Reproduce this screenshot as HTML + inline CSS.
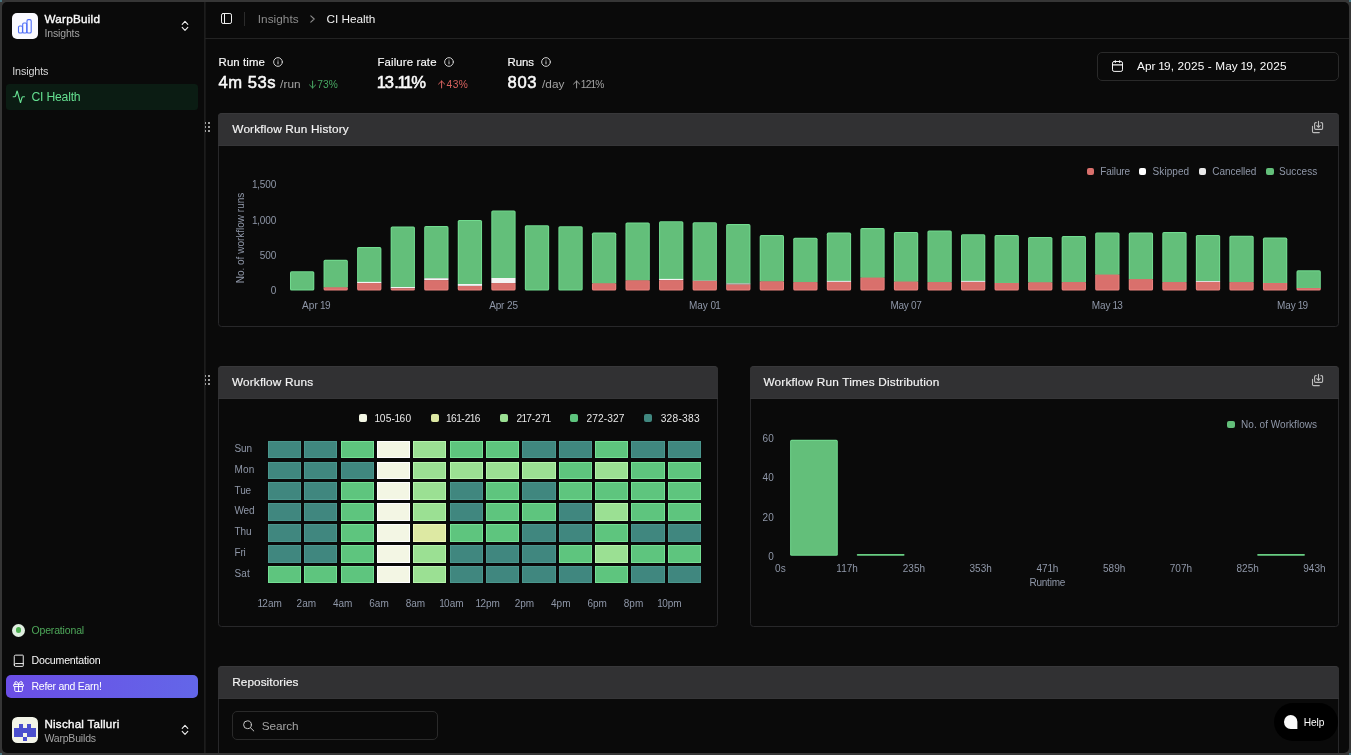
<!DOCTYPE html>
<html><head><meta charset="utf-8"><title>CI Health</title>
<style>
html,body{margin:0;padding:0;}
body{width:1351px;height:755px;overflow:hidden;background:#363636;font-family:"Liberation Sans",sans-serif;position:relative;}
#win{position:absolute;left:2px;top:2px;width:1347px;height:751px;background:#0a0a0a;border-radius:5px;overflow:hidden;}
#app{position:absolute;left:-2px;top:-2px;width:1351px;height:755px;will-change:transform;}
.t{position:absolute;white-space:nowrap;}
.abs{position:absolute;}
.t i{font-style:normal;margin:0 -0.07em;}
.card{position:absolute;border:1px solid #28282a;border-radius:3.5px;box-sizing:border-box;background:#0a0a0a;}
.hd{position:absolute;left:-1px;top:-1px;right:-1px;height:33px;background:#313133;border-radius:4px 4px 0 0;box-sizing:border-box;border-top:1px solid #38383a;border-bottom:1px solid #363638;}
svg{position:absolute;overflow:visible;}
</style></head><body>
<div class="abs" style="left:0;top:0;width:2px;height:2px;background:#4a7580"></div>
<div class="abs" style="right:0;top:0;width:2px;height:2px;background:#4a7580"></div>
<div class="abs" style="left:0;bottom:0;width:2px;height:2px;background:#4a7580"></div>
<div class="abs" style="right:0;bottom:0;width:2px;height:2px;background:#4a7580"></div>
<div id="win"><div id="app">
<div class="abs" style="left:204px;top:0;width:1px;height:755px;background:#1d1d1d"></div><div class="abs" style="left:205px;top:0;width:1px;height:755px;background:#171717"></div>
<div class="abs" style="left:12px;top:13px;width:26px;height:26px;border-radius:5px;background:#fafaff"></div>
<svg style="left:12px;top:13px" width="26" height="26" viewBox="0 0 26 26" fill="none" stroke="#4f6ef7" stroke-width="1.1">
<rect x="6.5" y="13" width="4" height="7" rx="1.3"/><rect x="10.7" y="10" width="4" height="10" rx="1.3"/><rect x="15" y="6.6" width="4.2" height="13.4" rx="1.3"/></svg>
<span id="wb" class="t" style="left:44.50px;top:11.00px;font-size:11.7px;line-height:16px;color:#fafafa;font-weight:400;letter-spacing:0.245px;-webkit-text-stroke:0.37px #fafafa;">WarpBuild</span>
<span id="wsub" class="t" style="left:44.50px;top:26.00px;font-size:10.5px;line-height:15px;color:#a3a3a3;font-weight:400;letter-spacing:-0.150px;">Insights</span>
<svg style="left:181.3px;top:20.1px" width="8" height="11.6" viewBox="0 0 8 11.6" fill="none" stroke="#ededed" stroke-width="1.1" stroke-linecap="round" stroke-linejoin="round"><path d="M1.200 4.300L4 1.300L6.800 4.300"/><path d="M1.200 7.300L4 10.300L6.800 7.300"/></svg>
<span id="sins" class="t" style="left:12.20px;top:64.00px;font-size:10.8px;line-height:15px;color:#d4d4d4;font-weight:400;letter-spacing:-0.138px;">Insights</span>
<div class="abs" style="left:6px;top:84px;width:192px;height:25.6px;border-radius:3.5px;background:#0b1c13"></div>
<svg style="left:11.5px;top:90.1px" width="13.6" height="13.6" viewBox="0 0 24 24" fill="none" stroke="#66e092" stroke-width="2" stroke-linecap="round" stroke-linejoin="round"><path d="M22 12h-2.48a2 2 0 0 0-1.93 1.46l-2.35 8.36a.25.25 0 0 1-.48 0L9.24 2.18a.25.25 0 0 0-.48 0l-2.35 8.36A2 2 0 0 1 4.49 12H2"/></svg>
<span id="cih" class="t" style="left:31.50px;top:89.00px;font-size:12.2px;line-height:17px;color:#64df90;font-weight:400;letter-spacing:-0.211px;">CI Health</span>
<div class="abs" style="left:12px;top:623.5px;width:13px;height:13px;border-radius:50%;background:#dfeee0"></div>
<div class="abs" style="left:15.7px;top:627.2px;width:5.6px;height:5.6px;border-radius:50%;background:#4caf50"></div>
<span id="oper" class="t" style="left:31.50px;top:623.00px;font-size:10.5px;line-height:15px;color:#4ea85a;font-weight:400;letter-spacing:-0.164px;">Operational</span>
<svg style="left:11.83px;top:654.15px" width="13.5" height="13.5" viewBox="0 0 24 24" fill="none" stroke="#f5f5f5" stroke-width="1.7" stroke-linecap="round" stroke-linejoin="round"><path d="M4 19.5v-15A2.5 2.5 0 0 1 6.500 2H19a1 1 0 0 1 1 1v18a1 1 0 0 1-1 1H6.500a1 1 0 0 1 0-5H20"/></svg>
<span id="docs" class="t" style="left:31.50px;top:653.00px;font-size:10.6px;line-height:15px;color:#fafafa;font-weight:400;letter-spacing:-0.184px;">Documentation</span>
<div class="abs" style="left:5.5px;top:675px;width:192.5px;height:22.5px;border-radius:5px;background:linear-gradient(90deg,#6b4ee6,#6366e8)"></div>
<svg style="left:11.93px;top:680px" width="13.1" height="13.1" viewBox="0 0 24 24" fill="none" stroke="#ffffff" stroke-width="1.75" stroke-linecap="round" stroke-linejoin="round"><rect x="3" y="8" width="18" height="4" rx="1"/><path d="M12 8v13"/><path d="M19 12v7a2 2 0 0 1-2 2H7a2 2 0 0 1-2-2v-7"/><path d="M7.500 8a2.500 2.500 0 0 1 0-5A4.800 8 0 0 1 12 8a4.800 8 0 0 1 4.500-5 2.500 2.500 0 0 1 0 5"/></svg>
<span id="refer" class="t" style="left:31.50px;top:679.00px;font-size:10.5px;line-height:15px;color:#ffffff;font-weight:400;letter-spacing:-0.273px;">Refer and Earn!</span>
<div class="abs" style="left:12px;top:717px;width:26px;height:26px;border-radius:5.5px;background:#f3f4e8;overflow:hidden"><div class="abs" style="left:6.55px;top:6.90px;width:4.35px;height:4.35px;background:#4b4fce"></div><div class="abs" style="left:15.15px;top:6.90px;width:4.35px;height:4.35px;background:#4b4fce"></div><div class="abs" style="left:2.25px;top:11.20px;width:4.35px;height:4.35px;background:#4b4fce"></div><div class="abs" style="left:6.55px;top:11.20px;width:4.35px;height:4.35px;background:#4b4fce"></div><div class="abs" style="left:10.85px;top:11.20px;width:4.35px;height:4.35px;background:#4b4fce"></div><div class="abs" style="left:15.15px;top:11.20px;width:4.35px;height:4.35px;background:#4b4fce"></div><div class="abs" style="left:19.45px;top:11.20px;width:4.35px;height:4.35px;background:#4b4fce"></div><div class="abs" style="left:2.25px;top:15.50px;width:4.35px;height:4.35px;background:#4b4fce"></div><div class="abs" style="left:6.55px;top:15.50px;width:4.35px;height:4.35px;background:#4b4fce"></div><div class="abs" style="left:15.15px;top:15.50px;width:4.35px;height:4.35px;background:#4b4fce"></div><div class="abs" style="left:19.45px;top:15.50px;width:4.35px;height:4.35px;background:#4b4fce"></div><div class="abs" style="left:10.85px;top:19.80px;width:4.35px;height:4.35px;background:#4b4fce"></div></div>
<span id="nt" class="t" style="left:44.40px;top:716.00px;font-size:11.6px;line-height:16px;color:#fafafa;font-weight:400;letter-spacing:0.254px;-webkit-text-stroke:0.37px #fafafa;">Nischal Talluri</span>
<span id="wbs" class="t" style="left:44.40px;top:731.00px;font-size:10.5px;line-height:15px;color:#a3a3a3;font-weight:400;letter-spacing:-0.180px;">WarpBuilds</span>
<svg style="left:181px;top:724.1px" width="8" height="11.6" viewBox="0 0 8 11.6" fill="none" stroke="#ededed" stroke-width="1.1" stroke-linecap="round" stroke-linejoin="round"><path d="M1.200 4.300L4 1.300L6.800 4.300"/><path d="M1.200 7.300L4 10.300L6.800 7.300"/></svg>
<div class="abs" style="left:205px;top:38px;width:1146px;height:1px;background:#232323"></div>
<svg style="left:220px;top:12px" width="13" height="13" viewBox="0 0 13 13" fill="none" stroke="#f0f0f0" stroke-width="1" stroke-linecap="round" stroke-linejoin="round"><rect x="1.500" y="1.500" width="10" height="10" rx="1.600"/><path d="M4.500 1.500v10"/></svg>
<div class="abs" style="left:244px;top:12px;width:1px;height:14px;background:#2b2b2b"></div>
<span id="bins" class="t" style="left:257.70px;top:11.00px;font-size:11.8px;line-height:17px;color:#8c8c8c;font-weight:400;letter-spacing:0.050px;">Insights</span>
<svg style="left:310.1px;top:15.3px" width="5" height="8" viewBox="0 0 5 8" fill="none" stroke="#8c8c8c" stroke-width="1.1" stroke-linecap="round" stroke-linejoin="round"><path d="M0.8 0.8 L4.2 4 L0.8 7.2"/></svg>
<span id="bcih" class="t" style="left:326.60px;top:11.00px;font-size:11.8px;line-height:17px;color:#f0f0f0;font-weight:400;letter-spacing:-0.044px;">CI Health</span>
<span id="rt" class="t" style="left:218.60px;top:54.00px;font-size:11.4px;line-height:16px;color:#fafafa;font-weight:400;letter-spacing:0.100px;-webkit-text-stroke:0.16px #fafafa;">Run time</span>
<svg style="left:272.5px;top:57.0px" width="10" height="10" viewBox="0 0 10 10" fill="none" stroke="#dadada" stroke-width="0.95" stroke-linecap="round"><circle cx="5" cy="5" r="4.35"/><path d="M5 4.7v2.2"/><path d="M5 3.1v0.05"/></svg>
<span id="rtv" class="t" style="left:218.60px;top:71.00px;font-size:16.6px;line-height:23px;color:#fafafa;font-weight:400;letter-spacing:0.500px;-webkit-text-stroke:0.53px #fafafa;">4m 53s</span>
<span id="rtu" class="t" style="left:280.00px;top:76.00px;font-size:11.8px;line-height:17px;color:#a3a3a3;font-weight:400;letter-spacing:0.100px;">/run</span>
<svg style="left:308.75px;top:79.60px" width="7.2" height="9" viewBox="0 0 7.2 9" fill="none" stroke="#48a863" stroke-width="1" stroke-linecap="round" stroke-linejoin="round"><path d="M3.6 1.05V7.95M0.55 4.95L3.6 7.95L6.65 4.95"/></svg>
<span id="rtd" class="t" style="left:317.30px;top:78.00px;font-size:10.2px;line-height:14px;color:#48a863;font-weight:400;letter-spacing:0.067px;">73%</span>
<span id="fr" class="t" style="left:377.50px;top:54.00px;font-size:11.4px;line-height:16px;color:#fafafa;font-weight:400;letter-spacing:0.125px;-webkit-text-stroke:0.16px #fafafa;">Failure rate</span>
<svg style="left:444.4px;top:57.0px" width="10" height="10" viewBox="0 0 10 10" fill="none" stroke="#dadada" stroke-width="0.95" stroke-linecap="round"><circle cx="5" cy="5" r="4.35"/><path d="M5 4.7v2.2"/><path d="M5 3.1v0.05"/></svg>
<span id="frv" class="t" style="left:378.60px;top:71.00px;font-size:16.6px;line-height:23px;color:#fafafa;font-weight:400;letter-spacing:0.316px;-webkit-text-stroke:0.53px #fafafa;"><i style="margin:0 -0.105em">1</i>3.<i style="margin:0 -0.105em">1</i><i style="margin:0 -0.105em">1</i>%</span>
<svg style="left:437.85px;top:79.60px" width="7.2" height="9" viewBox="0 0 7.2 9" fill="none" stroke="#d9635f" stroke-width="1" stroke-linecap="round" stroke-linejoin="round"><path d="M3.6 7.95V1.05M0.55 4.05L3.6 1.05L6.65 4.05"/></svg>
<span id="frd" class="t" style="left:446.60px;top:78.00px;font-size:10.2px;line-height:14px;color:#d9635f;font-weight:400;letter-spacing:0.400px;">43%</span>
<span id="ru" class="t" style="left:507.60px;top:54.00px;font-size:11.4px;line-height:16px;color:#fafafa;font-weight:400;letter-spacing:-0.100px;-webkit-text-stroke:0.16px #fafafa;">Runs</span>
<svg style="left:541.4000000000001px;top:57.0px" width="10" height="10" viewBox="0 0 10 10" fill="none" stroke="#dadada" stroke-width="0.95" stroke-linecap="round"><circle cx="5" cy="5" r="4.35"/><path d="M5 4.7v2.2"/><path d="M5 3.1v0.05"/></svg>
<span id="ruv" class="t" style="left:507.60px;top:71.00px;font-size:16.6px;line-height:23px;color:#fafafa;font-weight:400;letter-spacing:0.634px;-webkit-text-stroke:0.53px #fafafa;">803</span>
<span id="ruu" class="t" style="left:542.00px;top:76.00px;font-size:11.8px;line-height:17px;color:#a3a3a3;font-weight:400;letter-spacing:0.075px;">/day</span>
<svg style="left:572.85px;top:79.60px" width="7.2" height="9" viewBox="0 0 7.2 9" fill="none" stroke="#a3a3a3" stroke-width="1" stroke-linecap="round" stroke-linejoin="round"><path d="M3.6 7.95V1.05M0.55 4.05L3.6 1.05L6.65 4.05"/></svg>
<span id="rud" class="t" style="left:581.50px;top:78.00px;font-size:10.2px;line-height:14px;color:#a3a3a3;font-weight:400;letter-spacing:-0.150px;"><i>1</i>2<i>1</i>%</span>
<div class="abs" style="left:1097px;top:51.5px;width:242px;height:29px;box-sizing:border-box;border:1px solid #2a2a2a;border-radius:5px"></div>
<svg style="left:1111px;top:59px" width="13" height="14" viewBox="0 0 13 14" fill="none" stroke="#f5f5f5" stroke-width="1" stroke-linecap="round" stroke-linejoin="round"><rect x="1.500" y="2.500" width="10" height="9.900" rx="1.600"/><path d="M4.300 1.600v2M8.700 1.600v2"/><path d="M1.500 5.800h10" stroke-width="1.200"/></svg>
<span id="date" class="t" style="left:1136.90px;top:58.00px;font-size:11.8px;line-height:17px;color:#fafafa;font-weight:400;letter-spacing:0.126px;">Apr <i>1</i>9, 2025 - May <i>1</i>9, 2025</span>
<div class="abs" style="left:205px;top:121.3px;width:8px;height:12px;overflow:hidden"><div class="abs" style="left:-0.9px;top:1.0px;width:2px;height:2px;border-radius:50%;background:#d0d0d0"></div><div class="abs" style="left:2.8px;top:1.0px;width:2px;height:2px;border-radius:50%;background:#d0d0d0"></div><div class="abs" style="left:-0.9px;top:5.0px;width:2px;height:2px;border-radius:50%;background:#d0d0d0"></div><div class="abs" style="left:2.8px;top:5.0px;width:2px;height:2px;border-radius:50%;background:#d0d0d0"></div><div class="abs" style="left:-0.9px;top:9.0px;width:2px;height:2px;border-radius:50%;background:#d0d0d0"></div><div class="abs" style="left:2.8px;top:9.0px;width:2px;height:2px;border-radius:50%;background:#d0d0d0"></div></div>
<div class="abs" style="left:205px;top:374.3px;width:8px;height:12px;overflow:hidden"><div class="abs" style="left:-0.9px;top:1.0px;width:2px;height:2px;border-radius:50%;background:#d0d0d0"></div><div class="abs" style="left:2.8px;top:1.0px;width:2px;height:2px;border-radius:50%;background:#d0d0d0"></div><div class="abs" style="left:-0.9px;top:5.0px;width:2px;height:2px;border-radius:50%;background:#d0d0d0"></div><div class="abs" style="left:2.8px;top:5.0px;width:2px;height:2px;border-radius:50%;background:#d0d0d0"></div><div class="abs" style="left:-0.9px;top:9.0px;width:2px;height:2px;border-radius:50%;background:#d0d0d0"></div><div class="abs" style="left:2.8px;top:9.0px;width:2px;height:2px;border-radius:50%;background:#d0d0d0"></div></div>
<div class="card" style="left:218px;top:113px;width:1121px;height:214px"><div class="hd"></div></div>
<span id="h1" class="t" style="left:232.30px;top:121.00px;font-size:11.8px;line-height:17px;color:#f5f5f5;font-weight:400;letter-spacing:0.165px;-webkit-text-stroke:0.17px #f5f5f5;">Workflow Run History</span>
<svg style="left:1311px;top:120px" width="14" height="14" viewBox="0 0 14 14" fill="none" stroke="#bdbdbd" stroke-width="1.1" stroke-linecap="round" stroke-linejoin="round"><path d="M5.300 2.600H4.800a1.200 1.200 0 0 0-1.200 1.200V8.200a1.200 1.200 0 0 0 1.200 1.200H10.400a1.200 1.200 0 0 0 1.200-1.200V3.800a1.200 1.200 0 0 0-1.200-1.200H9.900"/><path d="M7.500 1.300V7.300M5.800 5.700L7.500 7.400L9.200 5.700"/><path d="M1.500 6.200V11.400a1.200 1.200 0 0 0 1.200 1.200H8.300"/></svg>
<span id="y1500" class="t" style="right:1074.60px;top:178.00px;font-size:10px;line-height:14px;color:#8f97a8;"><i>1</i>,500</span>
<span id="y1000" class="t" style="right:1074.60px;top:214.00px;font-size:10px;line-height:14px;color:#8f97a8;"><i>1</i>,000</span>
<span id="y500" class="t" style="right:1074.60px;top:249.00px;font-size:10px;line-height:14px;color:#8f97a8;">500</span>
<span id="y0" class="t" style="right:1074.60px;top:284.00px;font-size:10px;line-height:14px;color:#8f97a8;">0</span>
<span id="ytitle" class="t" style="left:190.6px;top:230.8px;width:100px;height:14px;line-height:14px;text-align:center;font-size:10px;color:#8f97a8;transform:rotate(-90deg);letter-spacing:0px">No. of workflow runs</span>
<svg style="left:0;top:0" width="1351" height="340" viewBox="0 0 1351 340"><rect x="290.00" y="271.20" width="24.3" height="19.30" rx="1.6" fill="#72dc90"/><rect x="291.00" y="272.20" width="22.3" height="17.30" rx="0.8" fill="#63bf7a"/><path d="M323.55 261.40a1.6 1.6 0 0 1 1.6 -1.6h21.1a1.6 1.6 0 0 1 1.6 1.6V287.60H323.55Z" fill="#72dc90"/><rect x="324.55" y="260.80" width="22.3" height="26.80" fill="#63bf7a"/><path d="M323.55 287.60H347.85V288.90a1.6 1.6 0 0 1 -1.6 1.6h-21.1a1.6 1.6 0 0 1 -1.6 -1.6Z" fill="#ec8580"/><path d="M324.55 287.60H346.85V288.90a0.7 0.7 0 0 1 -0.7 0.7h-20.900000000000002a0.7 0.7 0 0 1 -0.7 -0.7Z" fill="#d9706c"/><path d="M357.10 248.70a1.6 1.6 0 0 1 1.6 -1.6h21.1a1.6 1.6 0 0 1 1.6 1.6V281.90H357.10Z" fill="#72dc90"/><rect x="358.10" y="248.10" width="22.3" height="33.80" fill="#63bf7a"/><rect x="357.10" y="281.90" width="24.3" height="1.40" fill="#f4f4f4"/><path d="M357.10 283.30H381.40V288.90a1.6 1.6 0 0 1 -1.6 1.6h-21.1a1.6 1.6 0 0 1 -1.6 -1.6Z" fill="#ec8580"/><path d="M358.10 283.30H380.40V288.90a0.7 0.7 0 0 1 -0.7 0.7h-20.900000000000002a0.7 0.7 0 0 1 -0.7 -0.7Z" fill="#d9706c"/><path d="M390.65 228.10a1.6 1.6 0 0 1 1.6 -1.6h21.1a1.6 1.6 0 0 1 1.6 1.6V287.00H390.65Z" fill="#72dc90"/><rect x="391.65" y="227.50" width="22.3" height="59.50" fill="#63bf7a"/><rect x="390.65" y="287.00" width="24.3" height="1.40" fill="#f4f4f4"/><path d="M390.65 288.40H414.95V288.90a1.6 1.6 0 0 1 -1.6 1.6h-21.1a1.6 1.6 0 0 1 -1.6 -1.6Z" fill="#ec8580"/><path d="M391.65 288.40H413.95V288.90a0.7 0.7 0 0 1 -0.7 0.7h-20.900000000000002a0.7 0.7 0 0 1 -0.7 -0.7Z" fill="#d9706c"/><path d="M424.20 227.65a1.6 1.6 0 0 1 1.6 -1.6h21.1a1.6 1.6 0 0 1 1.6 1.6V278.20H424.20Z" fill="#72dc90"/><rect x="425.20" y="227.05" width="22.3" height="51.15" fill="#63bf7a"/><rect x="424.20" y="278.20" width="24.3" height="2.00" fill="#f4f4f4"/><path d="M424.20 280.20H448.50V288.90a1.6 1.6 0 0 1 -1.6 1.6h-21.1a1.6 1.6 0 0 1 -1.6 -1.6Z" fill="#ec8580"/><path d="M425.20 280.20H447.50V288.90a0.7 0.7 0 0 1 -0.7 0.7h-20.900000000000002a0.7 0.7 0 0 1 -0.7 -0.7Z" fill="#d9706c"/><path d="M457.75 221.60a1.6 1.6 0 0 1 1.6 -1.6h21.1a1.6 1.6 0 0 1 1.6 1.6V284.00H457.75Z" fill="#72dc90"/><rect x="458.75" y="221.00" width="22.3" height="63.00" fill="#63bf7a"/><rect x="457.75" y="284.00" width="24.3" height="1.90" fill="#f4f4f4"/><path d="M457.75 285.90H482.05V288.90a1.6 1.6 0 0 1 -1.6 1.6h-21.1a1.6 1.6 0 0 1 -1.6 -1.6Z" fill="#ec8580"/><path d="M458.75 285.90H481.05V288.90a0.7 0.7 0 0 1 -0.7 0.7h-20.900000000000002a0.7 0.7 0 0 1 -0.7 -0.7Z" fill="#d9706c"/><path d="M491.30 212.00a1.6 1.6 0 0 1 1.6 -1.6h21.1a1.6 1.6 0 0 1 1.6 1.6V278.00H491.30Z" fill="#72dc90"/><rect x="492.30" y="211.40" width="22.3" height="66.60" fill="#63bf7a"/><rect x="491.30" y="278.00" width="24.3" height="5.20" fill="#f4f4f4"/><path d="M491.30 283.20H515.60V288.90a1.6 1.6 0 0 1 -1.6 1.6h-21.1a1.6 1.6 0 0 1 -1.6 -1.6Z" fill="#ec8580"/><path d="M492.30 283.20H514.60V288.90a0.7 0.7 0 0 1 -0.7 0.7h-20.900000000000002a0.7 0.7 0 0 1 -0.7 -0.7Z" fill="#d9706c"/><rect x="524.85" y="225.20" width="24.3" height="65.30" rx="1.6" fill="#72dc90"/><rect x="525.85" y="226.20" width="22.3" height="63.30" rx="0.8" fill="#63bf7a"/><rect x="558.40" y="226.20" width="24.3" height="64.30" rx="1.6" fill="#72dc90"/><rect x="559.40" y="227.20" width="22.3" height="62.30" rx="0.8" fill="#63bf7a"/><path d="M591.95 234.20a1.6 1.6 0 0 1 1.6 -1.6h21.1a1.6 1.6 0 0 1 1.6 1.6V283.60H591.95Z" fill="#72dc90"/><rect x="592.95" y="233.60" width="22.3" height="50.00" fill="#63bf7a"/><path d="M591.95 283.60H616.25V288.90a1.6 1.6 0 0 1 -1.6 1.6h-21.1a1.6 1.6 0 0 1 -1.6 -1.6Z" fill="#ec8580"/><path d="M592.95 283.60H615.25V288.90a0.7 0.7 0 0 1 -0.7 0.7h-20.900000000000002a0.7 0.7 0 0 1 -0.7 -0.7Z" fill="#d9706c"/><path d="M625.50 224.10a1.6 1.6 0 0 1 1.6 -1.6h21.1a1.6 1.6 0 0 1 1.6 1.6V280.40H625.50Z" fill="#72dc90"/><rect x="626.50" y="223.50" width="22.3" height="56.90" fill="#63bf7a"/><path d="M625.50 280.40H649.80V288.90a1.6 1.6 0 0 1 -1.6 1.6h-21.1a1.6 1.6 0 0 1 -1.6 -1.6Z" fill="#ec8580"/><path d="M626.50 280.40H648.80V288.90a0.7 0.7 0 0 1 -0.7 0.7h-20.900000000000002a0.7 0.7 0 0 1 -0.7 -0.7Z" fill="#d9706c"/><path d="M659.05 222.80a1.6 1.6 0 0 1 1.6 -1.6h21.1a1.6 1.6 0 0 1 1.6 1.6V278.90H659.05Z" fill="#72dc90"/><rect x="660.05" y="222.20" width="22.3" height="56.70" fill="#63bf7a"/><rect x="659.05" y="278.90" width="24.3" height="1.30" fill="#f4f4f4"/><path d="M659.05 280.20H683.35V288.90a1.6 1.6 0 0 1 -1.6 1.6h-21.1a1.6 1.6 0 0 1 -1.6 -1.6Z" fill="#ec8580"/><path d="M660.05 280.20H682.35V288.90a0.7 0.7 0 0 1 -0.7 0.7h-20.900000000000002a0.7 0.7 0 0 1 -0.7 -0.7Z" fill="#d9706c"/><path d="M692.60 223.80a1.6 1.6 0 0 1 1.6 -1.6h21.1a1.6 1.6 0 0 1 1.6 1.6V280.30H692.60Z" fill="#72dc90"/><rect x="693.60" y="223.20" width="22.3" height="57.10" fill="#63bf7a"/><rect x="692.60" y="280.30" width="24.3" height="0.80" fill="#b5dcb8"/><path d="M692.60 281.10H716.90V288.90a1.6 1.6 0 0 1 -1.6 1.6h-21.1a1.6 1.6 0 0 1 -1.6 -1.6Z" fill="#ec8580"/><path d="M693.60 281.10H715.90V288.90a0.7 0.7 0 0 1 -0.7 0.7h-20.900000000000002a0.7 0.7 0 0 1 -0.7 -0.7Z" fill="#d9706c"/><path d="M726.15 225.70a1.6 1.6 0 0 1 1.6 -1.6h21.1a1.6 1.6 0 0 1 1.6 1.6V283.40H726.15Z" fill="#72dc90"/><rect x="727.15" y="225.10" width="22.3" height="58.30" fill="#63bf7a"/><rect x="726.15" y="283.40" width="24.3" height="1.30" fill="#dcdcdc"/><path d="M726.15 284.70H750.45V288.90a1.6 1.6 0 0 1 -1.6 1.6h-21.1a1.6 1.6 0 0 1 -1.6 -1.6Z" fill="#ec8580"/><path d="M727.15 284.70H749.45V288.90a0.7 0.7 0 0 1 -0.7 0.7h-20.900000000000002a0.7 0.7 0 0 1 -0.7 -0.7Z" fill="#d9706c"/><path d="M759.70 236.70a1.6 1.6 0 0 1 1.6 -1.6h21.1a1.6 1.6 0 0 1 1.6 1.6V281.40H759.70Z" fill="#72dc90"/><rect x="760.70" y="236.10" width="22.3" height="45.30" fill="#63bf7a"/><path d="M759.70 281.40H784.00V288.90a1.6 1.6 0 0 1 -1.6 1.6h-21.1a1.6 1.6 0 0 1 -1.6 -1.6Z" fill="#ec8580"/><path d="M760.70 281.40H783.00V288.90a0.7 0.7 0 0 1 -0.7 0.7h-20.900000000000002a0.7 0.7 0 0 1 -0.7 -0.7Z" fill="#d9706c"/><path d="M793.25 239.30a1.6 1.6 0 0 1 1.6 -1.6h21.1a1.6 1.6 0 0 1 1.6 1.6V282.20H793.25Z" fill="#72dc90"/><rect x="794.25" y="238.70" width="22.3" height="43.50" fill="#63bf7a"/><path d="M793.25 282.20H817.55V288.90a1.6 1.6 0 0 1 -1.6 1.6h-21.1a1.6 1.6 0 0 1 -1.6 -1.6Z" fill="#ec8580"/><path d="M794.25 282.20H816.55V288.90a0.7 0.7 0 0 1 -0.7 0.7h-20.900000000000002a0.7 0.7 0 0 1 -0.7 -0.7Z" fill="#d9706c"/><path d="M826.80 234.20a1.6 1.6 0 0 1 1.6 -1.6h21.1a1.6 1.6 0 0 1 1.6 1.6V280.90H826.80Z" fill="#72dc90"/><rect x="827.80" y="233.60" width="22.3" height="47.30" fill="#63bf7a"/><rect x="826.80" y="280.90" width="24.3" height="1.00" fill="#f4f4f4"/><path d="M826.80 281.90H851.10V288.90a1.6 1.6 0 0 1 -1.6 1.6h-21.1a1.6 1.6 0 0 1 -1.6 -1.6Z" fill="#ec8580"/><path d="M827.80 281.90H850.10V288.90a0.7 0.7 0 0 1 -0.7 0.7h-20.900000000000002a0.7 0.7 0 0 1 -0.7 -0.7Z" fill="#d9706c"/><path d="M860.35 229.70a1.6 1.6 0 0 1 1.6 -1.6h21.1a1.6 1.6 0 0 1 1.6 1.6V277.70H860.35Z" fill="#72dc90"/><rect x="861.35" y="229.10" width="22.3" height="48.60" fill="#63bf7a"/><path d="M860.35 277.70H884.65V288.90a1.6 1.6 0 0 1 -1.6 1.6h-21.1a1.6 1.6 0 0 1 -1.6 -1.6Z" fill="#ec8580"/><path d="M861.35 277.70H883.65V288.90a0.7 0.7 0 0 1 -0.7 0.7h-20.900000000000002a0.7 0.7 0 0 1 -0.7 -0.7Z" fill="#d9706c"/><path d="M893.90 233.60a1.6 1.6 0 0 1 1.6 -1.6h21.1a1.6 1.6 0 0 1 1.6 1.6V281.70H893.90Z" fill="#72dc90"/><rect x="894.90" y="233.00" width="22.3" height="48.70" fill="#63bf7a"/><path d="M893.90 281.70H918.20V288.90a1.6 1.6 0 0 1 -1.6 1.6h-21.1a1.6 1.6 0 0 1 -1.6 -1.6Z" fill="#ec8580"/><path d="M894.90 281.70H917.20V288.90a0.7 0.7 0 0 1 -0.7 0.7h-20.900000000000002a0.7 0.7 0 0 1 -0.7 -0.7Z" fill="#d9706c"/><path d="M927.45 232.10a1.6 1.6 0 0 1 1.6 -1.6h21.1a1.6 1.6 0 0 1 1.6 1.6V282.30H927.45Z" fill="#72dc90"/><rect x="928.45" y="231.50" width="22.3" height="50.80" fill="#63bf7a"/><path d="M927.45 282.30H951.75V288.90a1.6 1.6 0 0 1 -1.6 1.6h-21.1a1.6 1.6 0 0 1 -1.6 -1.6Z" fill="#ec8580"/><path d="M928.45 282.30H950.75V288.90a0.7 0.7 0 0 1 -0.7 0.7h-20.900000000000002a0.7 0.7 0 0 1 -0.7 -0.7Z" fill="#d9706c"/><path d="M961.00 235.80a1.6 1.6 0 0 1 1.6 -1.6h21.1a1.6 1.6 0 0 1 1.6 1.6V280.90H961.00Z" fill="#72dc90"/><rect x="962.00" y="235.20" width="22.3" height="45.70" fill="#63bf7a"/><rect x="961.00" y="280.90" width="24.3" height="1.00" fill="#f4f4f4"/><path d="M961.00 281.90H985.30V288.90a1.6 1.6 0 0 1 -1.6 1.6h-21.1a1.6 1.6 0 0 1 -1.6 -1.6Z" fill="#ec8580"/><path d="M962.00 281.90H984.30V288.90a0.7 0.7 0 0 1 -0.7 0.7h-20.900000000000002a0.7 0.7 0 0 1 -0.7 -0.7Z" fill="#d9706c"/><path d="M994.55 236.70a1.6 1.6 0 0 1 1.6 -1.6h21.1a1.6 1.6 0 0 1 1.6 1.6V282.90H994.55Z" fill="#72dc90"/><rect x="995.55" y="236.10" width="22.3" height="46.80" fill="#63bf7a"/><path d="M994.55 282.90H1018.85V288.90a1.6 1.6 0 0 1 -1.6 1.6h-21.1a1.6 1.6 0 0 1 -1.6 -1.6Z" fill="#ec8580"/><path d="M995.55 282.90H1017.85V288.90a0.7 0.7 0 0 1 -0.7 0.7h-20.900000000000002a0.7 0.7 0 0 1 -0.7 -0.7Z" fill="#d9706c"/><path d="M1028.10 238.60a1.6 1.6 0 0 1 1.6 -1.6h21.1a1.6 1.6 0 0 1 1.6 1.6V282.60H1028.10Z" fill="#72dc90"/><rect x="1029.10" y="238.00" width="22.3" height="44.60" fill="#63bf7a"/><path d="M1028.10 282.60H1052.40V288.90a1.6 1.6 0 0 1 -1.6 1.6h-21.1a1.6 1.6 0 0 1 -1.6 -1.6Z" fill="#ec8580"/><path d="M1029.10 282.60H1051.40V288.90a0.7 0.7 0 0 1 -0.7 0.7h-20.900000000000002a0.7 0.7 0 0 1 -0.7 -0.7Z" fill="#d9706c"/><path d="M1061.65 237.70a1.6 1.6 0 0 1 1.6 -1.6h21.1a1.6 1.6 0 0 1 1.6 1.6V282.30H1061.65Z" fill="#72dc90"/><rect x="1062.65" y="237.10" width="22.3" height="45.20" fill="#63bf7a"/><path d="M1061.65 282.30H1085.95V288.90a1.6 1.6 0 0 1 -1.6 1.6h-21.1a1.6 1.6 0 0 1 -1.6 -1.6Z" fill="#ec8580"/><path d="M1062.65 282.30H1084.95V288.90a0.7 0.7 0 0 1 -0.7 0.7h-20.900000000000002a0.7 0.7 0 0 1 -0.7 -0.7Z" fill="#d9706c"/><path d="M1095.20 234.00a1.6 1.6 0 0 1 1.6 -1.6h21.1a1.6 1.6 0 0 1 1.6 1.6V274.80H1095.20Z" fill="#72dc90"/><rect x="1096.20" y="233.40" width="22.3" height="41.40" fill="#63bf7a"/><path d="M1095.20 274.80H1119.50V288.90a1.6 1.6 0 0 1 -1.6 1.6h-21.1a1.6 1.6 0 0 1 -1.6 -1.6Z" fill="#ec8580"/><path d="M1096.20 274.80H1118.50V288.90a0.7 0.7 0 0 1 -0.7 0.7h-20.900000000000002a0.7 0.7 0 0 1 -0.7 -0.7Z" fill="#d9706c"/><path d="M1128.75 234.20a1.6 1.6 0 0 1 1.6 -1.6h21.1a1.6 1.6 0 0 1 1.6 1.6V279.30H1128.75Z" fill="#72dc90"/><rect x="1129.75" y="233.60" width="22.3" height="45.70" fill="#63bf7a"/><path d="M1128.75 279.30H1153.05V288.90a1.6 1.6 0 0 1 -1.6 1.6h-21.1a1.6 1.6 0 0 1 -1.6 -1.6Z" fill="#ec8580"/><path d="M1129.75 279.30H1152.05V288.90a0.7 0.7 0 0 1 -0.7 0.7h-20.900000000000002a0.7 0.7 0 0 1 -0.7 -0.7Z" fill="#d9706c"/><path d="M1162.30 233.70a1.6 1.6 0 0 1 1.6 -1.6h21.1a1.6 1.6 0 0 1 1.6 1.6V282.30H1162.30Z" fill="#72dc90"/><rect x="1163.30" y="233.10" width="22.3" height="49.20" fill="#63bf7a"/><path d="M1162.30 282.30H1186.60V288.90a1.6 1.6 0 0 1 -1.6 1.6h-21.1a1.6 1.6 0 0 1 -1.6 -1.6Z" fill="#ec8580"/><path d="M1163.30 282.30H1185.60V288.90a0.7 0.7 0 0 1 -0.7 0.7h-20.900000000000002a0.7 0.7 0 0 1 -0.7 -0.7Z" fill="#d9706c"/><path d="M1195.85 236.50a1.6 1.6 0 0 1 1.6 -1.6h21.1a1.6 1.6 0 0 1 1.6 1.6V281.00H1195.85Z" fill="#72dc90"/><rect x="1196.85" y="235.90" width="22.3" height="45.10" fill="#63bf7a"/><rect x="1195.85" y="281.00" width="24.3" height="0.90" fill="#f4f4f4"/><path d="M1195.85 281.90H1220.15V288.90a1.6 1.6 0 0 1 -1.6 1.6h-21.1a1.6 1.6 0 0 1 -1.6 -1.6Z" fill="#ec8580"/><path d="M1196.85 281.90H1219.15V288.90a0.7 0.7 0 0 1 -0.7 0.7h-20.900000000000002a0.7 0.7 0 0 1 -0.7 -0.7Z" fill="#d9706c"/><path d="M1229.40 237.30a1.6 1.6 0 0 1 1.6 -1.6h21.1a1.6 1.6 0 0 1 1.6 1.6V282.30H1229.40Z" fill="#72dc90"/><rect x="1230.40" y="236.70" width="22.3" height="45.60" fill="#63bf7a"/><path d="M1229.40 282.30H1253.70V288.90a1.6 1.6 0 0 1 -1.6 1.6h-21.1a1.6 1.6 0 0 1 -1.6 -1.6Z" fill="#ec8580"/><path d="M1230.40 282.30H1252.70V288.90a0.7 0.7 0 0 1 -0.7 0.7h-20.900000000000002a0.7 0.7 0 0 1 -0.7 -0.7Z" fill="#d9706c"/><path d="M1262.95 239.20a1.6 1.6 0 0 1 1.6 -1.6h21.1a1.6 1.6 0 0 1 1.6 1.6V282.90H1262.95Z" fill="#72dc90"/><rect x="1263.95" y="238.60" width="22.3" height="44.30" fill="#63bf7a"/><path d="M1262.95 282.90H1287.25V288.90a1.6 1.6 0 0 1 -1.6 1.6h-21.1a1.6 1.6 0 0 1 -1.6 -1.6Z" fill="#ec8580"/><path d="M1263.95 282.90H1286.25V288.90a0.7 0.7 0 0 1 -0.7 0.7h-20.900000000000002a0.7 0.7 0 0 1 -0.7 -0.7Z" fill="#d9706c"/><path d="M1296.50 271.90a1.6 1.6 0 0 1 1.6 -1.6h21.1a1.6 1.6 0 0 1 1.6 1.6V287.90H1296.50Z" fill="#72dc90"/><rect x="1297.50" y="271.30" width="22.3" height="16.60" fill="#63bf7a"/><path d="M1296.50 287.90H1320.80V288.90a1.6 1.6 0 0 1 -1.6 1.6h-21.1a1.6 1.6 0 0 1 -1.6 -1.6Z" fill="#ec8580"/><path d="M1297.50 287.90H1319.80V288.90a0.7 0.7 0 0 1 -0.7 0.7h-20.900000000000002a0.7 0.7 0 0 1 -0.7 -0.7Z" fill="#d9706c"/></svg>
<span id="xApr19" class="t" style="left:266.30px;width:100px;text-align:center;top:299.00px;font-size:10px;line-height:14px;color:#8f97a8;letter-spacing:0.084px;"><span id="xApr19i">Apr <i>1</i>9</span></span>
<span id="xApr25" class="t" style="left:453.50px;width:100px;text-align:center;top:299.00px;font-size:10px;line-height:14px;color:#8f97a8;letter-spacing:-0.133px;"><span id="xApr25i">Apr 25</span></span>
<span id="xMay01" class="t" style="left:654.50px;width:100px;text-align:center;top:299.00px;font-size:10px;line-height:14px;color:#8f97a8;letter-spacing:-0.067px;"><span id="xMay01i">May 0<i>1</i></span></span>
<span id="xMay07" class="t" style="left:856.00px;width:100px;text-align:center;top:299.00px;font-size:10px;line-height:14px;color:#8f97a8;letter-spacing:-0.300px;"><span id="xMay07i">May 07</span></span>
<span id="xMay13" class="t" style="left:1057.30px;width:100px;text-align:center;top:299.00px;font-size:10px;line-height:14px;color:#8f97a8;letter-spacing:-0.067px;"><span id="xMay13i">May <i>1</i>3</span></span>
<span id="xMay19" class="t" style="left:1242.50px;width:100px;text-align:center;top:299.00px;font-size:10px;line-height:14px;color:#8f97a8;letter-spacing:-0.067px;"><span id="xMay19i">May <i>1</i>9</span></span>
<div class="abs" style="left:1087.1px;top:167.70000000000002px;width:7.4px;height:7.4px;border-radius:2px;background:#d9706c"></div>
<span id="lgFailure" class="t" style="left:1100.30px;top:165.00px;font-size:10px;line-height:14px;color:#8f97a8;font-weight:400;letter-spacing:-0.129px;">Failure</span>
<div class="abs" style="left:1139px;top:167.70000000000002px;width:7.4px;height:7.4px;border-radius:2px;background:#ffffff"></div>
<span id="lgSkipped" class="t" style="left:1152.60px;top:165.00px;font-size:10px;line-height:14px;color:#8f97a8;font-weight:400;letter-spacing:0.071px;">Skipped</span>
<div class="abs" style="left:1198.6px;top:167.70000000000002px;width:7.4px;height:7.4px;border-radius:2px;background:#e8e8e8"></div>
<span id="lgCancelled" class="t" style="left:1212.20px;top:165.00px;font-size:10px;line-height:14px;color:#8f97a8;font-weight:400;letter-spacing:-0.033px;">Cancelled</span>
<div class="abs" style="left:1266.2px;top:167.70000000000002px;width:7.4px;height:7.4px;border-radius:2px;background:#63bf7a"></div>
<span id="lgSuccess" class="t" style="left:1279.00px;top:165.00px;font-size:10px;line-height:14px;color:#8f97a8;font-weight:400;letter-spacing:0.071px;">Success</span>
<div class="card" style="left:218px;top:366px;width:500px;height:261px"><div class="hd"></div></div>
<span id="h2" class="t" style="left:231.90px;top:374.00px;font-size:11.8px;line-height:17px;color:#f5f5f5;font-weight:400;letter-spacing:0.170px;-webkit-text-stroke:0.17px #f5f5f5;">Workflow Runs</span>
<span id="dSun" class="t" style="left:234.50px;top:442.00px;font-size:10px;line-height:14px;color:#8f97a8;font-weight:400;letter-spacing:-0.133px;">Sun</span>
<div class="abs" style="left:267.80px;top:440.70px;width:33.3px;height:17.8px;background:#40877f;box-sizing:border-box;border:1px solid #4a968d"></div><div class="abs" style="left:304.15px;top:440.70px;width:33.3px;height:17.8px;background:#40877f;box-sizing:border-box;border:1px solid #4a968d"></div><div class="abs" style="left:340.50px;top:440.70px;width:33.3px;height:17.8px;background:#5ec57e;box-sizing:border-box;border:1px solid #74e094"></div><div class="abs" style="left:376.85px;top:440.70px;width:33.3px;height:17.8px;background:#f3f6e4;box-sizing:border-box;border:1px solid #ffffff"></div><div class="abs" style="left:413.20px;top:440.70px;width:33.3px;height:17.8px;background:#9be093;box-sizing:border-box;border:1px solid #b4f5ab"></div><div class="abs" style="left:449.55px;top:440.70px;width:33.3px;height:17.8px;background:#5ec57e;box-sizing:border-box;border:1px solid #74e094"></div><div class="abs" style="left:485.90px;top:440.70px;width:33.3px;height:17.8px;background:#5ec57e;box-sizing:border-box;border:1px solid #74e094"></div><div class="abs" style="left:522.25px;top:440.70px;width:33.3px;height:17.8px;background:#40877f;box-sizing:border-box;border:1px solid #4a968d"></div><div class="abs" style="left:558.60px;top:440.70px;width:33.3px;height:17.8px;background:#40877f;box-sizing:border-box;border:1px solid #4a968d"></div><div class="abs" style="left:594.95px;top:440.70px;width:33.3px;height:17.8px;background:#5ec57e;box-sizing:border-box;border:1px solid #74e094"></div><div class="abs" style="left:631.30px;top:440.70px;width:33.3px;height:17.8px;background:#40877f;box-sizing:border-box;border:1px solid #4a968d"></div><div class="abs" style="left:667.65px;top:440.70px;width:33.3px;height:17.8px;background:#40877f;box-sizing:border-box;border:1px solid #4a968d"></div>
<span id="dMon" class="t" style="left:234.50px;top:463.00px;font-size:10px;line-height:14px;color:#8f97a8;font-weight:400;letter-spacing:0.233px;">Mon</span>
<div class="abs" style="left:267.80px;top:461.52px;width:33.3px;height:17.8px;background:#40877f;box-sizing:border-box;border:1px solid #4a968d"></div><div class="abs" style="left:304.15px;top:461.52px;width:33.3px;height:17.8px;background:#40877f;box-sizing:border-box;border:1px solid #4a968d"></div><div class="abs" style="left:340.50px;top:461.52px;width:33.3px;height:17.8px;background:#40877f;box-sizing:border-box;border:1px solid #4a968d"></div><div class="abs" style="left:376.85px;top:461.52px;width:33.3px;height:17.8px;background:#f3f6e4;box-sizing:border-box;border:1px solid #ffffff"></div><div class="abs" style="left:413.20px;top:461.52px;width:33.3px;height:17.8px;background:#9be093;box-sizing:border-box;border:1px solid #b4f5ab"></div><div class="abs" style="left:449.55px;top:461.52px;width:33.3px;height:17.8px;background:#9be093;box-sizing:border-box;border:1px solid #b4f5ab"></div><div class="abs" style="left:485.90px;top:461.52px;width:33.3px;height:17.8px;background:#9be093;box-sizing:border-box;border:1px solid #b4f5ab"></div><div class="abs" style="left:522.25px;top:461.52px;width:33.3px;height:17.8px;background:#9be093;box-sizing:border-box;border:1px solid #b4f5ab"></div><div class="abs" style="left:558.60px;top:461.52px;width:33.3px;height:17.8px;background:#5ec57e;box-sizing:border-box;border:1px solid #74e094"></div><div class="abs" style="left:594.95px;top:461.52px;width:33.3px;height:17.8px;background:#9be093;box-sizing:border-box;border:1px solid #b4f5ab"></div><div class="abs" style="left:631.30px;top:461.52px;width:33.3px;height:17.8px;background:#5ec57e;box-sizing:border-box;border:1px solid #74e094"></div><div class="abs" style="left:667.65px;top:461.52px;width:33.3px;height:17.8px;background:#5ec57e;box-sizing:border-box;border:1px solid #74e094"></div>
<span id="dTue" class="t" style="left:234.50px;top:484.00px;font-size:10px;line-height:14px;color:#8f97a8;font-weight:400;letter-spacing:-0.100px;">Tue</span>
<div class="abs" style="left:267.80px;top:482.34px;width:33.3px;height:17.8px;background:#40877f;box-sizing:border-box;border:1px solid #4a968d"></div><div class="abs" style="left:304.15px;top:482.34px;width:33.3px;height:17.8px;background:#40877f;box-sizing:border-box;border:1px solid #4a968d"></div><div class="abs" style="left:340.50px;top:482.34px;width:33.3px;height:17.8px;background:#5ec57e;box-sizing:border-box;border:1px solid #74e094"></div><div class="abs" style="left:376.85px;top:482.34px;width:33.3px;height:17.8px;background:#f3f6e4;box-sizing:border-box;border:1px solid #ffffff"></div><div class="abs" style="left:413.20px;top:482.34px;width:33.3px;height:17.8px;background:#9be093;box-sizing:border-box;border:1px solid #b4f5ab"></div><div class="abs" style="left:449.55px;top:482.34px;width:33.3px;height:17.8px;background:#40877f;box-sizing:border-box;border:1px solid #4a968d"></div><div class="abs" style="left:485.90px;top:482.34px;width:33.3px;height:17.8px;background:#5ec57e;box-sizing:border-box;border:1px solid #74e094"></div><div class="abs" style="left:522.25px;top:482.34px;width:33.3px;height:17.8px;background:#40877f;box-sizing:border-box;border:1px solid #4a968d"></div><div class="abs" style="left:558.60px;top:482.34px;width:33.3px;height:17.8px;background:#5ec57e;box-sizing:border-box;border:1px solid #74e094"></div><div class="abs" style="left:594.95px;top:482.34px;width:33.3px;height:17.8px;background:#5ec57e;box-sizing:border-box;border:1px solid #74e094"></div><div class="abs" style="left:631.30px;top:482.34px;width:33.3px;height:17.8px;background:#5ec57e;box-sizing:border-box;border:1px solid #74e094"></div><div class="abs" style="left:667.65px;top:482.34px;width:33.3px;height:17.8px;background:#5ec57e;box-sizing:border-box;border:1px solid #74e094"></div>
<span id="dWed" class="t" style="left:234.50px;top:504.00px;font-size:10px;line-height:14px;color:#8f97a8;font-weight:400;letter-spacing:-0.200px;">Wed</span>
<div class="abs" style="left:267.80px;top:503.16px;width:33.3px;height:17.8px;background:#40877f;box-sizing:border-box;border:1px solid #4a968d"></div><div class="abs" style="left:304.15px;top:503.16px;width:33.3px;height:17.8px;background:#40877f;box-sizing:border-box;border:1px solid #4a968d"></div><div class="abs" style="left:340.50px;top:503.16px;width:33.3px;height:17.8px;background:#5ec57e;box-sizing:border-box;border:1px solid #74e094"></div><div class="abs" style="left:376.85px;top:503.16px;width:33.3px;height:17.8px;background:#f3f6e4;box-sizing:border-box;border:1px solid #ffffff"></div><div class="abs" style="left:413.20px;top:503.16px;width:33.3px;height:17.8px;background:#9be093;box-sizing:border-box;border:1px solid #b4f5ab"></div><div class="abs" style="left:449.55px;top:503.16px;width:33.3px;height:17.8px;background:#40877f;box-sizing:border-box;border:1px solid #4a968d"></div><div class="abs" style="left:485.90px;top:503.16px;width:33.3px;height:17.8px;background:#5ec57e;box-sizing:border-box;border:1px solid #74e094"></div><div class="abs" style="left:522.25px;top:503.16px;width:33.3px;height:17.8px;background:#5ec57e;box-sizing:border-box;border:1px solid #74e094"></div><div class="abs" style="left:558.60px;top:503.16px;width:33.3px;height:17.8px;background:#40877f;box-sizing:border-box;border:1px solid #4a968d"></div><div class="abs" style="left:594.95px;top:503.16px;width:33.3px;height:17.8px;background:#9be093;box-sizing:border-box;border:1px solid #b4f5ab"></div><div class="abs" style="left:631.30px;top:503.16px;width:33.3px;height:17.8px;background:#5ec57e;box-sizing:border-box;border:1px solid #74e094"></div><div class="abs" style="left:667.65px;top:503.16px;width:33.3px;height:17.8px;background:#5ec57e;box-sizing:border-box;border:1px solid #74e094"></div>
<span id="dThu" class="t" style="left:234.50px;top:525.00px;font-size:10px;line-height:14px;color:#8f97a8;font-weight:400;letter-spacing:-0.133px;">Thu</span>
<div class="abs" style="left:267.80px;top:523.98px;width:33.3px;height:17.8px;background:#40877f;box-sizing:border-box;border:1px solid #4a968d"></div><div class="abs" style="left:304.15px;top:523.98px;width:33.3px;height:17.8px;background:#40877f;box-sizing:border-box;border:1px solid #4a968d"></div><div class="abs" style="left:340.50px;top:523.98px;width:33.3px;height:17.8px;background:#5ec57e;box-sizing:border-box;border:1px solid #74e094"></div><div class="abs" style="left:376.85px;top:523.98px;width:33.3px;height:17.8px;background:#f3f6e4;box-sizing:border-box;border:1px solid #ffffff"></div><div class="abs" style="left:413.20px;top:523.98px;width:33.3px;height:17.8px;background:#dde9a3;box-sizing:border-box;border:1px solid #eef7b8"></div><div class="abs" style="left:449.55px;top:523.98px;width:33.3px;height:17.8px;background:#5ec57e;box-sizing:border-box;border:1px solid #74e094"></div><div class="abs" style="left:485.90px;top:523.98px;width:33.3px;height:17.8px;background:#5ec57e;box-sizing:border-box;border:1px solid #74e094"></div><div class="abs" style="left:522.25px;top:523.98px;width:33.3px;height:17.8px;background:#40877f;box-sizing:border-box;border:1px solid #4a968d"></div><div class="abs" style="left:558.60px;top:523.98px;width:33.3px;height:17.8px;background:#40877f;box-sizing:border-box;border:1px solid #4a968d"></div><div class="abs" style="left:594.95px;top:523.98px;width:33.3px;height:17.8px;background:#5ec57e;box-sizing:border-box;border:1px solid #74e094"></div><div class="abs" style="left:631.30px;top:523.98px;width:33.3px;height:17.8px;background:#40877f;box-sizing:border-box;border:1px solid #4a968d"></div><div class="abs" style="left:667.65px;top:523.98px;width:33.3px;height:17.8px;background:#40877f;box-sizing:border-box;border:1px solid #4a968d"></div>
<span id="dFri" class="t" style="left:234.50px;top:546.00px;font-size:10px;line-height:14px;color:#8f97a8;font-weight:400;letter-spacing:-0.167px;">Fri</span>
<div class="abs" style="left:267.80px;top:544.80px;width:33.3px;height:17.8px;background:#40877f;box-sizing:border-box;border:1px solid #4a968d"></div><div class="abs" style="left:304.15px;top:544.80px;width:33.3px;height:17.8px;background:#40877f;box-sizing:border-box;border:1px solid #4a968d"></div><div class="abs" style="left:340.50px;top:544.80px;width:33.3px;height:17.8px;background:#5ec57e;box-sizing:border-box;border:1px solid #74e094"></div><div class="abs" style="left:376.85px;top:544.80px;width:33.3px;height:17.8px;background:#f3f6e4;box-sizing:border-box;border:1px solid #ffffff"></div><div class="abs" style="left:413.20px;top:544.80px;width:33.3px;height:17.8px;background:#9be093;box-sizing:border-box;border:1px solid #b4f5ab"></div><div class="abs" style="left:449.55px;top:544.80px;width:33.3px;height:17.8px;background:#40877f;box-sizing:border-box;border:1px solid #4a968d"></div><div class="abs" style="left:485.90px;top:544.80px;width:33.3px;height:17.8px;background:#40877f;box-sizing:border-box;border:1px solid #4a968d"></div><div class="abs" style="left:522.25px;top:544.80px;width:33.3px;height:17.8px;background:#40877f;box-sizing:border-box;border:1px solid #4a968d"></div><div class="abs" style="left:558.60px;top:544.80px;width:33.3px;height:17.8px;background:#5ec57e;box-sizing:border-box;border:1px solid #74e094"></div><div class="abs" style="left:594.95px;top:544.80px;width:33.3px;height:17.8px;background:#9be093;box-sizing:border-box;border:1px solid #b4f5ab"></div><div class="abs" style="left:631.30px;top:544.80px;width:33.3px;height:17.8px;background:#5ec57e;box-sizing:border-box;border:1px solid #74e094"></div><div class="abs" style="left:667.65px;top:544.80px;width:33.3px;height:17.8px;background:#5ec57e;box-sizing:border-box;border:1px solid #74e094"></div>
<span id="dSat" class="t" style="left:234.50px;top:567.00px;font-size:10px;line-height:14px;color:#8f97a8;font-weight:400;letter-spacing:0.100px;">Sat</span>
<div class="abs" style="left:267.80px;top:565.62px;width:33.3px;height:17.8px;background:#5ec57e;box-sizing:border-box;border:1px solid #74e094"></div><div class="abs" style="left:304.15px;top:565.62px;width:33.3px;height:17.8px;background:#5ec57e;box-sizing:border-box;border:1px solid #74e094"></div><div class="abs" style="left:340.50px;top:565.62px;width:33.3px;height:17.8px;background:#5ec57e;box-sizing:border-box;border:1px solid #74e094"></div><div class="abs" style="left:376.85px;top:565.62px;width:33.3px;height:17.8px;background:#f3f6e4;box-sizing:border-box;border:1px solid #ffffff"></div><div class="abs" style="left:413.20px;top:565.62px;width:33.3px;height:17.8px;background:#9be093;box-sizing:border-box;border:1px solid #b4f5ab"></div><div class="abs" style="left:449.55px;top:565.62px;width:33.3px;height:17.8px;background:#40877f;box-sizing:border-box;border:1px solid #4a968d"></div><div class="abs" style="left:485.90px;top:565.62px;width:33.3px;height:17.8px;background:#40877f;box-sizing:border-box;border:1px solid #4a968d"></div><div class="abs" style="left:522.25px;top:565.62px;width:33.3px;height:17.8px;background:#40877f;box-sizing:border-box;border:1px solid #4a968d"></div><div class="abs" style="left:558.60px;top:565.62px;width:33.3px;height:17.8px;background:#40877f;box-sizing:border-box;border:1px solid #4a968d"></div><div class="abs" style="left:594.95px;top:565.62px;width:33.3px;height:17.8px;background:#5ec57e;box-sizing:border-box;border:1px solid #74e094"></div><div class="abs" style="left:631.30px;top:565.62px;width:33.3px;height:17.8px;background:#40877f;box-sizing:border-box;border:1px solid #4a968d"></div><div class="abs" style="left:667.65px;top:565.62px;width:33.3px;height:17.8px;background:#40877f;box-sizing:border-box;border:1px solid #4a968d"></div>
<span id="hr12am" class="t" style="left:220.00px;width:100px;text-align:center;top:597.00px;font-size:10px;line-height:14px;color:#8f97a8;letter-spacing:0.000px;"><span id="hr12ami"><i>1</i>2am</span></span>
<span id="hr2am" class="t" style="left:256.35px;width:100px;text-align:center;top:597.00px;font-size:10px;line-height:14px;color:#8f97a8;letter-spacing:0.000px;"><span id="hr2ami">2am</span></span>
<span id="hr4am" class="t" style="left:292.70px;width:100px;text-align:center;top:597.00px;font-size:10px;line-height:14px;color:#8f97a8;letter-spacing:0.000px;"><span id="hr4ami">4am</span></span>
<span id="hr6am" class="t" style="left:329.05px;width:100px;text-align:center;top:597.00px;font-size:10px;line-height:14px;color:#8f97a8;letter-spacing:0.000px;"><span id="hr6ami">6am</span></span>
<span id="hr8am" class="t" style="left:365.40px;width:100px;text-align:center;top:597.00px;font-size:10px;line-height:14px;color:#8f97a8;letter-spacing:0.000px;"><span id="hr8ami">8am</span></span>
<span id="hr10am" class="t" style="left:401.75px;width:100px;text-align:center;top:597.00px;font-size:10px;line-height:14px;color:#8f97a8;letter-spacing:0.000px;"><span id="hr10ami"><i>1</i>0am</span></span>
<span id="hr12pm" class="t" style="left:438.10px;width:100px;text-align:center;top:597.00px;font-size:10px;line-height:14px;color:#8f97a8;letter-spacing:0.000px;"><span id="hr12pmi"><i>1</i>2pm</span></span>
<span id="hr2pm" class="t" style="left:474.45px;width:100px;text-align:center;top:597.00px;font-size:10px;line-height:14px;color:#8f97a8;letter-spacing:0.000px;"><span id="hr2pmi">2pm</span></span>
<span id="hr4pm" class="t" style="left:510.80px;width:100px;text-align:center;top:597.00px;font-size:10px;line-height:14px;color:#8f97a8;letter-spacing:0.000px;"><span id="hr4pmi">4pm</span></span>
<span id="hr6pm" class="t" style="left:547.15px;width:100px;text-align:center;top:597.00px;font-size:10px;line-height:14px;color:#8f97a8;letter-spacing:0.000px;"><span id="hr6pmi">6pm</span></span>
<span id="hr8pm" class="t" style="left:583.50px;width:100px;text-align:center;top:597.00px;font-size:10px;line-height:14px;color:#8f97a8;letter-spacing:0.000px;"><span id="hr8pmi">8pm</span></span>
<span id="hr10pm" class="t" style="left:619.85px;width:100px;text-align:center;top:597.00px;font-size:10px;line-height:14px;color:#8f97a8;letter-spacing:0.000px;"><span id="hr10pmi"><i>1</i>0pm</span></span>
<div class="abs" style="left:358.8px;top:413.79999999999995px;width:8.2px;height:8.2px;border-radius:2px;background:#f3f6e4"></div>
<span id="hl105-160" class="t" style="left:375.30px;top:412.00px;font-size:10.2px;line-height:14px;color:#e8e8e8;font-weight:400;letter-spacing:0.200px;"><i>1</i>05-<i>1</i>60</span>
<div class="abs" style="left:430.7px;top:413.79999999999995px;width:8.2px;height:8.2px;border-radius:2px;background:#dde9a3"></div>
<span id="hl161-216" class="t" style="left:446.70px;top:412.00px;font-size:10.2px;line-height:14px;color:#e8e8e8;font-weight:400;letter-spacing:0.100px;"><i>1</i>6<i>1</i>-2<i>1</i>6</span>
<div class="abs" style="left:500px;top:413.79999999999995px;width:8.2px;height:8.2px;border-radius:2px;background:#9be093"></div>
<span id="hl217-271" class="t" style="left:516.50px;top:412.00px;font-size:10.2px;line-height:14px;color:#e8e8e8;font-weight:400;letter-spacing:-0.100px;">2<i>1</i>7-27<i>1</i></span>
<div class="abs" style="left:570.1px;top:413.79999999999995px;width:8.2px;height:8.2px;border-radius:2px;background:#5ec57e"></div>
<span id="hl272-327" class="t" style="left:586.60px;top:412.00px;font-size:10.2px;line-height:14px;color:#e8e8e8;font-weight:400;letter-spacing:0.071px;">272-327</span>
<div class="abs" style="left:643.9px;top:413.79999999999995px;width:8.2px;height:8.2px;border-radius:2px;background:#40877f"></div>
<span id="hl328-383" class="t" style="left:660.70px;top:412.00px;font-size:10.2px;line-height:14px;color:#e8e8e8;font-weight:400;letter-spacing:0.257px;">328-383</span>
<div class="card" style="left:750px;top:366px;width:589px;height:261px"><div class="hd"></div></div>
<span id="h3" class="t" style="left:763.50px;top:374.00px;font-size:11.8px;line-height:17px;color:#f5f5f5;font-weight:400;letter-spacing:0.187px;-webkit-text-stroke:0.17px #f5f5f5;">Workflow Run Times Distribution</span>
<svg style="left:1311px;top:373px" width="14" height="14" viewBox="0 0 14 14" fill="none" stroke="#bdbdbd" stroke-width="1.1" stroke-linecap="round" stroke-linejoin="round"><path d="M5.300 2.600H4.800a1.200 1.200 0 0 0-1.200 1.200V8.200a1.200 1.200 0 0 0 1.200 1.200H10.400a1.200 1.200 0 0 0 1.200-1.200V3.800a1.200 1.200 0 0 0-1.200-1.200H9.900"/><path d="M7.500 1.300V7.300M5.800 5.700L7.500 7.400L9.200 5.700"/><path d="M1.500 6.200V11.400a1.200 1.200 0 0 0 1.200 1.200H8.300"/></svg>
<span id="dy60" class="t" style="right:577.30px;top:432.00px;font-size:10px;line-height:14px;color:#8f97a8;">60</span>
<span id="dy40" class="t" style="right:577.30px;top:471.00px;font-size:10px;line-height:14px;color:#8f97a8;">40</span>
<span id="dy20" class="t" style="right:577.30px;top:511.00px;font-size:10px;line-height:14px;color:#8f97a8;">20</span>
<span id="dy0" class="t" style="right:577.30px;top:550.00px;font-size:10px;line-height:14px;color:#8f97a8;">0</span>
<span id="dx0s" class="t" style="left:730.40px;width:100px;text-align:center;top:562.00px;font-size:10px;line-height:14px;color:#8f97a8;letter-spacing:0.000px;"><span id="dx0si">0s</span></span>
<span id="dx117h" class="t" style="left:797.15px;width:100px;text-align:center;top:562.00px;font-size:10px;line-height:14px;color:#8f97a8;letter-spacing:0.000px;"><span id="dx117hi"><i style="margin:0 -0.025em">1</i><i style="margin:0 -0.025em">1</i>7h</span></span>
<span id="dx235h" class="t" style="left:863.90px;width:100px;text-align:center;top:562.00px;font-size:10px;line-height:14px;color:#8f97a8;letter-spacing:0.000px;"><span id="dx235hi">235h</span></span>
<span id="dx353h" class="t" style="left:930.65px;width:100px;text-align:center;top:562.00px;font-size:10px;line-height:14px;color:#8f97a8;letter-spacing:0.000px;"><span id="dx353hi">353h</span></span>
<span id="dx471h" class="t" style="left:997.40px;width:100px;text-align:center;top:562.00px;font-size:10px;line-height:14px;color:#8f97a8;letter-spacing:0.000px;"><span id="dx471hi">47<i style="margin:0 -0.025em">1</i>h</span></span>
<span id="dx589h" class="t" style="left:1064.15px;width:100px;text-align:center;top:562.00px;font-size:10px;line-height:14px;color:#8f97a8;letter-spacing:0.000px;"><span id="dx589hi">589h</span></span>
<span id="dx707h" class="t" style="left:1130.90px;width:100px;text-align:center;top:562.00px;font-size:10px;line-height:14px;color:#8f97a8;letter-spacing:0.000px;"><span id="dx707hi">707h</span></span>
<span id="dx825h" class="t" style="left:1197.65px;width:100px;text-align:center;top:562.00px;font-size:10px;line-height:14px;color:#8f97a8;letter-spacing:0.000px;"><span id="dx825hi">825h</span></span>
<span id="dx943h" class="t" style="left:1264.40px;width:100px;text-align:center;top:562.00px;font-size:10px;line-height:14px;color:#8f97a8;letter-spacing:0.000px;"><span id="dx943hi">943h</span></span>
<span id="runtime" class="t" style="left:997.30px;width:100px;text-align:center;top:576.00px;font-size:10px;line-height:14px;color:#8f97a8;letter-spacing:-0.214px;"><span id="runtimei">Runtime</span></span>
<svg style="left:0;top:400px" width="1351" height="200" viewBox="0 400 1351 200"><rect x="790.1" y="439.8" width="47.7" height="116" rx="1.6" fill="#72dc90"/><rect x="791.1" y="440.8" width="45.7" height="114" rx="0.8" fill="#63bf7a"/><rect x="856.8" y="553.9" width="47.7" height="1.9" rx="0.8" fill="#68cd82"/><rect x="1257.2" y="553.9" width="47.7" height="1.9" rx="0.8" fill="#68cd82"/></svg>
<div class="abs" style="left:1227.1px;top:420.5px;width:7.6px;height:7.6px;border-radius:2px;background:#63bf7a"></div>
<span id="dlg" class="t" style="left:1241.10px;top:418.00px;font-size:10px;line-height:14px;color:#8f97a8;font-weight:400;letter-spacing:0.037px;">No. of Workflows</span>
<div class="card" style="left:218px;top:666px;width:1121px;height:120px"><div class="hd"></div></div>
<span id="h4" class="t" style="left:232.20px;top:674.00px;font-size:11.8px;line-height:17px;color:#f5f5f5;font-weight:400;letter-spacing:0.067px;-webkit-text-stroke:0.17px #f5f5f5;">Repositories</span>
<div class="abs" style="left:232px;top:711px;width:206px;height:29px;box-sizing:border-box;border:1px solid #2a2a2a;border-radius:5px"></div>
<svg style="left:242px;top:719px" width="14" height="14" viewBox="0 0 14 14" fill="none" stroke="#c6c6c6" stroke-width="1" stroke-linecap="round"><circle cx="5.500" cy="5.750" r="3.900"/><path d="M8.400 8.700L11.800 12"/></svg>
<span id="search" class="t" style="left:261.80px;top:718.00px;font-size:11.8px;line-height:17px;color:#a3a3a3;font-weight:400;letter-spacing:-0.100px;">Search</span>
<div class="abs" style="left:1274px;top:702.5px;width:64px;height:38.5px;border-radius:19.5px;background:#000"></div>
<svg style="left:1284px;top:715px" width="13.4" height="14" viewBox="0 0 13.4 14"><path d="M6.700 0A6.700 6.700 0 0 1 13.400 6.700V14H6.700A6.700 7 0 0 1 6.700 0Z" fill="#fafafa"/></svg>
<span id="help" class="t" style="left:1303.80px;top:716.00px;font-size:10.2px;line-height:14px;color:#fafafa;font-weight:400;letter-spacing:-0.150px;">Help</span>
</div></div>
</body></html>
